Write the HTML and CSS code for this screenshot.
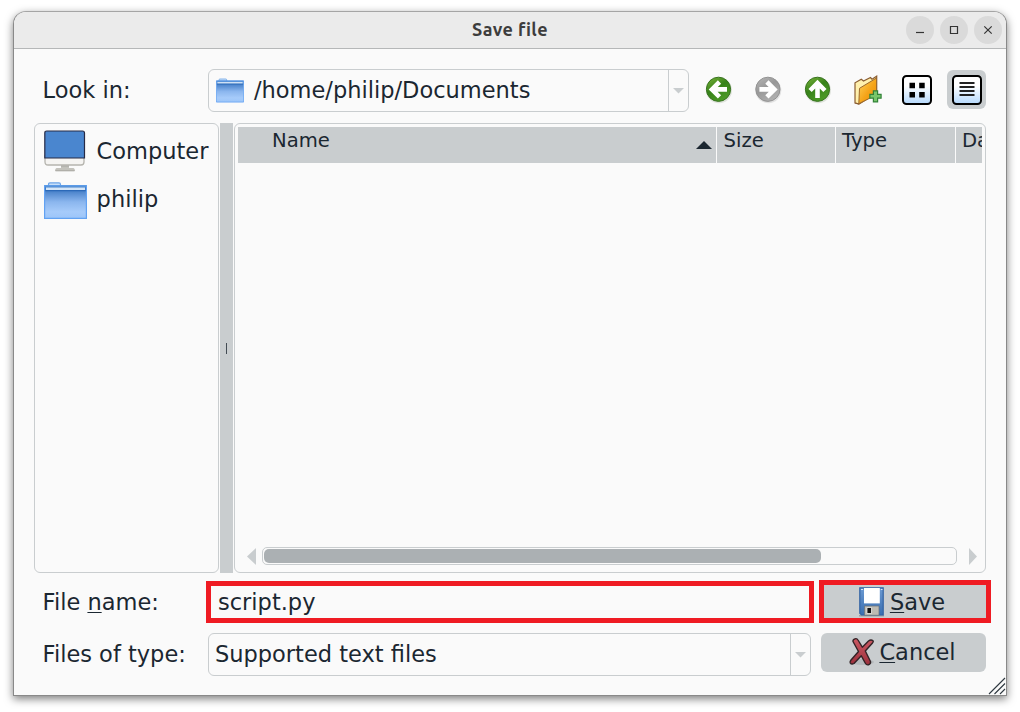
FILE: index.html
```html
<!DOCTYPE html>
<html lang="en">
<head>
<meta charset="utf-8">
<title>Save file</title>
<link rel="stylesheet" href="styles.css">
</head>
<body>
<svg class="defs" width="0" height="0" aria-hidden="true">
  <defs>
    <linearGradient id="blue" x1="0" y1="0" x2="0" y2="1"><stop offset="0" stop-color="#2868b8"/><stop offset=".5" stop-color="#8bb6ee"/><stop offset=".8" stop-color="#a6cbfa"/><stop offset="1" stop-color="#9cc5f9"/></linearGradient>
    <linearGradient id="green" x1="0" y1="0" x2=".6" y2="1"><stop offset="0" stop-color="#80b83c"/><stop offset=".5" stop-color="#37821a"/><stop offset="1" stop-color="#4c9a26"/></linearGradient>
    <linearGradient id="gray" x1="0" y1="0" x2=".6" y2="1"><stop offset="0" stop-color="#b8b8b8"/><stop offset=".5" stop-color="#989898"/><stop offset="1" stop-color="#b0b0b0"/></linearGradient>
    <linearGradient id="tile" x1="0" y1="0" x2="0" y2="1"><stop offset=".35" stop-color="#fff"/><stop offset="1" stop-color="#b4d8fc"/></linearGradient>
    <linearGradient id="orange" x1="0" y1="0" x2="1" y2="1"><stop offset="0" stop-color="#ffd45c"/><stop offset=".55" stop-color="#f5a318"/><stop offset="1" stop-color="#ee8f00"/></linearGradient>
    <linearGradient id="disk" x1="0" y1="0" x2="0" y2="1"><stop offset="0" stop-color="#6c9ad2"/><stop offset="1" stop-color="#396eb0"/></linearGradient>
    <linearGradient id="red" x1="0" y1="0" x2="0" y2="1"><stop offset="0" stop-color="#cb5963"/><stop offset="1" stop-color="#9c303c"/></linearGradient>
    <symbol id="folder" viewBox="0 0 43 37">
      <path d="M4.500 4V2.500Q4.500 .8 6 .8H15Q16.500 .8 16.500 2.500V4" fill="#c8dff8" stroke="#6da5e8" stroke-width="1.200"/>
      <path d="M.6 3.600H42.400V36.300H.6Z" fill="url(#blue)" stroke="#62a2f2" stroke-width="1.200"/>
      <path d="M1 3.500H42V5.500H1Z" fill="#5793db"/>
      <path d="M2 5.500H41V8H2Z" fill="#d5e5f6"/>
      <path d="M1.200 8H41.800V9.200H1.200Z" fill="#2b69b8"/>
    </symbol>
  </defs>
</svg>
<main class="window">
  <header class="titlebar">
    <h1 class="title">Save file</h1>
    <div class="controls">
      <span class="control"><svg viewBox="0 0 28 28"><path d="M10 16.500H18"/></svg></span>
      <span class="control"><svg viewBox="0 0 28 28"><path d="M10.500 10.500H17.500V17.500H10.500Z"/></svg></span>
      <span class="control"><svg viewBox="0 0 28 28"><path d="M10.300 10.300L17.700 17.700M17.700 10.300L10.300 17.700"/></svg></span>
    </div>
  </header>
  <div class="content">
    <div class="look-row">
      <span class="label">Look in:</span>
      <div class="combo path-combo">
        <svg class="small-folder"><use href="#folder"/></svg>
        <span class="value">/home/philip/Documents</span>
        <span class="drop"><svg width="11" height="6"><path d="M0 0H11L5.500 5.500Z" fill="#c9cdcf"/></svg></span>
      </div>
      <nav class="tools">
        <span class="tool"><svg viewBox="0 0 39 39"><circle cx="20" cy="20.200" r="13" fill="#dfe3dc"/><circle cx="19.500" cy="19.300" r="12.100" fill="url(#green)" stroke="#37721f"/><path d="M28 19.400H14M20.500 12L13 19.400L20.500 26.800" class="arrow"/></svg></span>
        <span class="tool"><svg viewBox="0 0 39 39"><circle cx="20.300" cy="20.200" r="13" fill="#e2e2e2"/><circle cx="19.900" cy="19.300" r="12.100" fill="url(#gray)" stroke="#929292"/><path d="M11.400 19.400H25.400M18.900 12L26.400 19.400L18.900 26.800" class="arrow"/></svg></span>
        <span class="tool"><svg viewBox="0 0 39 39"><circle cx="20" cy="20.200" r="13" fill="#dfe3dc"/><circle cx="19.500" cy="19.300" r="12.100" fill="url(#green)" stroke="#37721f"/><path d="M19.500 28V14M12.100 20.500L19.500 13L26.900 20.500" class="arrow"/></svg></span>
        <span class="tool"><svg viewBox="0 0 39 39">
          <path d="M7 33V12.800L13.300 9.300L15.500 11L22.500 7.500L24 9.200L28.700 6.200V23L11 34Z" fill="#fff0ad" stroke="#8a5d31" stroke-width="1.200"/>
          <path d="M10.800 33.700L11.500 18.300L28.500 8V24.800Z" fill="url(#orange)" stroke="#9b692e" stroke-width="1"/>
          <path d="M7.400 33L11 34" fill="none" stroke="#8a5d31"/>
          <path d="M25.400 20.900H29.600V24.400H33.100V28.200H29.600V31.900H25.400V28.200H21.900V24.400H25.400Z" fill="#77c66a" stroke="#328238" stroke-width="1.200"/></svg></span>
        <span class="tool"><svg viewBox="0 0 39 39"><rect x="6" y="6" width="28" height="28" rx="3.500" fill="url(#tile)" stroke="#000" stroke-width="2"/><path d="M12.500 12.700H18V18.200H12.500ZM22.200 12.700H27.700V18.200H22.200ZM12.500 22H18V27.500H12.500ZM22.200 22H27.700V27.500H22.200Z"/></svg></span>
        <span class="tool active"><svg viewBox="0 0 39 39"><rect x="6" y="6" width="28" height="28" rx="3.500" fill="url(#tile)" stroke="#000" stroke-width="2"/><path d="M12.500 13H27.500M12.500 17H27.500M12.500 21H27.500M12.500 25H27.500" stroke="#222" stroke-width="1.800"/></svg></span>
      </nav>
    </div>
    <div class="panels">
      <aside class="places">
        <div class="place computer">
          <svg viewBox="0 0 42 42"><path d="M1 26H40V32Q40 35 37 35H4Q1 35 1 32Z" fill="#f5f4f2" stroke="#b5b4ae" stroke-width="1.300"/><path d="M.8 28V3Q.8 1 2.800 1H38.500Q40.500 1 40.500 3V28Z" fill="#4a86cf" stroke="#262a46" stroke-width="1.200"/><path d="M17 35.700H25V38H29.500Q31 38.500 31 41H11Q11 38.500 12.500 38H17Z" fill="#c3c2bc"/><path d="M17 36H25M11.500 40.800H30.500" stroke="#a8a7a1"/></svg>
          <span>Computer</span>
        </div>
        <div class="place home"><svg><use href="#folder"/></svg><span>philip</span></div>
      </aside>
      <div class="splitter"><i></i></div>
      <section class="files">
        <div class="columns">
          <span class="col name">Name<svg width="16" height="8"><path d="M0 8L8 0L16 8Z" fill="#1b2731"/></svg></span>
          <span class="col size">Size</span>
          <span class="col type">Type</span>
          <span class="col date">Da</span>
        </div>
        <div class="scroll">
          <svg width="9" height="17"><path d="M9 0V17L0 8.500Z" fill="#c9cdcf"/></svg>
          <div class="track"><div class="thumb"></div></div>
          <svg width="8" height="17"><path d="M0 0V17L8 8.500Z" fill="#c9cdcf"/></svg>
        </div>
      </section>
    </div>
    <div class="name-row">
      <label class="label" for="filename">File <u>n</u>ame:</label>
      <input id="filename" class="filename" value="script.py" spellcheck="false">
      <button class="save"><svg viewBox="0 0 26 30"><path d="M0 28H25V29.500H0Z" fill="#9ba0a4"/><path d="M.8 .8H24.200V28H2.500L.8 26.300Z" fill="url(#disk)" stroke="#3263a3" stroke-width="1.200"/><path d="M5 1H20.800V16.400H5Z" fill="#fff"/><path d="M2 2.500H4M21.800 2.500H23.500" stroke="#dce8f5"/><path d="M5.500 19H20V28.300H5.500Z" fill="#bdbbb3" stroke="#69717a" stroke-width=".7"/><path d="M8 20.500H12.500V26.500H8Z" fill="#111" stroke="#fff" stroke-width=".7"/></svg><span><u>S</u>ave</span></button>
    </div>
    <div class="type-row">
      <span class="label">Files of type:</span>
      <div class="combo type-combo"><span class="value">Supported text files</span><span class="drop"><svg width="11" height="6"><path d="M0 0H11L5.500 5.500Z" fill="#c9cdcf"/></svg></span></div>
      <button class="cancel"><svg viewBox="0 0 26 30"><ellipse cx="13" cy="25" rx="12" ry="3" fill="#b5babd"/><path d="M4 4.500Q3.700 2.500 6 1.800Q8 1.200 9 3L13.300 10.200L19.500 4Q22 2 24 3.800Q24.800 4.800 23.500 6L16.300 14L21.500 24.500Q22 27 19.500 27.800Q17.500 28.300 16.500 26.500L12.300 18.800L5 26.500Q2.500 27.800 1.200 25.800Q.8 24.500 2 23L9.500 14.500Z" fill="url(#red)" stroke="#322326" stroke-width="1.400" stroke-linejoin="round"/></svg><span><u>C</u>ancel</span></button>
    </div>
  </div>
  <svg class="grip" width="18" height="18"><path d="M1 17L17 1M6.500 17L17 6.500M12 17L17 12" stroke="#303941" stroke-width="1.100"/></svg>
</main>
</body>
</html>
```
FILE: styles.css
```css
* { box-sizing: border-box; }
body {
  margin: 0;
  height: 712px;
  overflow: hidden;
  padding: 11px 13px;
  background: #fff;
  color: #1b2731;
  font: 22.5px/28px "DejaVu Sans", sans-serif;
}
svg { display: block; flex: none; }
.defs { position: absolute; }
.window {
  position: relative;
  width: 994px;
  height: 685px;
  border: 1px solid #898989;
  border-top-color: #a5a5a5;
  border-radius: 13px 13px 0 0;
  background: #fafafa;
  box-shadow: 0 3px 9px rgba(0, 0, 0, .5);
}
.titlebar {
  height: 37px;
  display: grid;
  grid-template-columns: 1fr auto 1fr;
  align-items: center;
  border-bottom: 1px solid #b5b7b8;
  border-radius: 12px 12px 0 0;
  background: #ebebeb;
}
.title {
  grid-column: 2;
  margin: 0;
  padding-bottom: 2px;
  font: bold 18px/34px Ubuntu, "Noto Sans", sans-serif;
  letter-spacing: .35px;
  color: #3d3d3d;
}
.controls { display: flex; gap: 6px; justify-content: flex-end; padding-right: 4px; }
.control { width: 28px; height: 28px; border-radius: 50%; background: #dadada; }
.control path { fill: none; stroke: #343434; stroke-width: 1.2; }
.content { padding: 20px 0 0 20px; }
.look-row, .name-row, .type-row { display: flex; }
.label { width: 174px; padding-left: 8.6px; white-space: nowrap; }
.look-row { height: 43px; }
.look-row .label { padding-top: 7px; }
.combo {
  display: flex;
  align-items: center;
  height: 43px;
  border: 1.5px solid #c9cdcf;
  border-radius: 6px;
  white-space: nowrap;
}
.value { padding-bottom: 2px; }
.drop {
  display: flex;
  align-items: center;
  justify-content: center;
  align-self: stretch;
  width: 20px;
  margin-left: auto;
  border-left: 1px solid #c9cdcf;
}
.path-combo { width: 481px; padding-left: 7px; }
.small-folder { width: 28px; height: 25px; margin-right: 10px; }
.tools { display: flex; gap: 10.7px; margin: 1px 0 0 9.5px; }
.tool { width: 39px; height: 39px; border-radius: 6px; }
.tool.active { background: #c9cdcf; }
.arrow { fill: none; stroke: #fff; stroke-width: 4.6; }
.panels { display: flex; height: 450px; margin-top: 11px; }
.places { width: 185px; border: 1.5px solid #c9cdcf; border-radius: 6px; padding: 6px 0 0 9px; }
.place { display: flex; align-items: center; height: 48px; }
.place svg { width: 43px; height: 37px; margin-right: 9.6px; }
.computer { height: 42px; }
.computer svg { width: 42px; height: 42px; margin-right: 10.6px; }
.home { height: 40px; margin-top: 8px; align-items: flex-start; }
.home svg { margin-top: 2px; }
.home span { margin-top: 5px; }
.splitter { width: 13px; margin: 0 1px; background: #c9cdcf; display: grid; place-items: center; }
.splitter i { width: 1px; height: 11px; background: #424b53; }
.files {
  display: flex;
  flex-direction: column;
  justify-content: space-between;
  width: 752px;
  border: 1.5px solid #c9cdcf;
  border-radius: 6px;
  padding: 3px 3px 7px;
}
.columns { display: flex; height: 36px; background: #c9cdcf; font-size: 19.6px; line-height: 28px; overflow: hidden; }
.col { flex: none; border-right: 1px solid #fafafa; padding-left: 6px; white-space: nowrap; }
.name { display: flex; justify-content: space-between; width: 479px; padding: 0 4px 0 34px; }
.name svg { margin-top: 14px; }
.size { width: 119px; padding-left: 6.6px; }
.type { width: 120px; }
.date { border: 0; }
.scroll { display: flex; align-items: center; padding: 0 5px 0 9px; }
.track { width: 696px; height: 18px; margin: 0 12px 0 6px; border: 1.5px solid #c9cdcf; border-radius: 5px; padding: 1px; }
.thumb { width: 557px; height: 14px; border-radius: 5px; background: #abb0b3; }
.name-row { height: 43px; margin-top: 7px; }
.name-row .label { width: 172px; padding-top: 8px; }
u { text-decoration-thickness: 1.2px; text-underline-offset: 2px; text-decoration-skip-ink: none; }
.filename, button { font: inherit; color: inherit; }
.filename {
  width: 608px;
  height: 42px;
  margin: 1px 5px 0 0;
  border: 5px solid #ef1b23;
  padding: 0 0 0 7px;
  outline: none;
  background: #fafafa;
}
button { display: flex; align-items: center; justify-content: center; padding: 0; border: 0; background: #c9cdcf; }
.save { width: 172px; height: 43px; border: 5px solid #ef1b23; padding-right: 6px; }
.save svg { width: 26px; height: 30px; margin-right: 5px; }
.type-row { margin-top: 10px; }
.type-row .label { padding-top: 7px; }
.type-combo { width: 603px; padding-left: 6px; }
.cancel { width: 165px; height: 39px; margin-left: 10px; padding: 0 2px 1px 0; border-radius: 6px; }
.cancel svg { width: 26px; height: 30px; margin-right: 4px; }
.grip { position: absolute; right: 0; bottom: 0; fill: none; }
```
